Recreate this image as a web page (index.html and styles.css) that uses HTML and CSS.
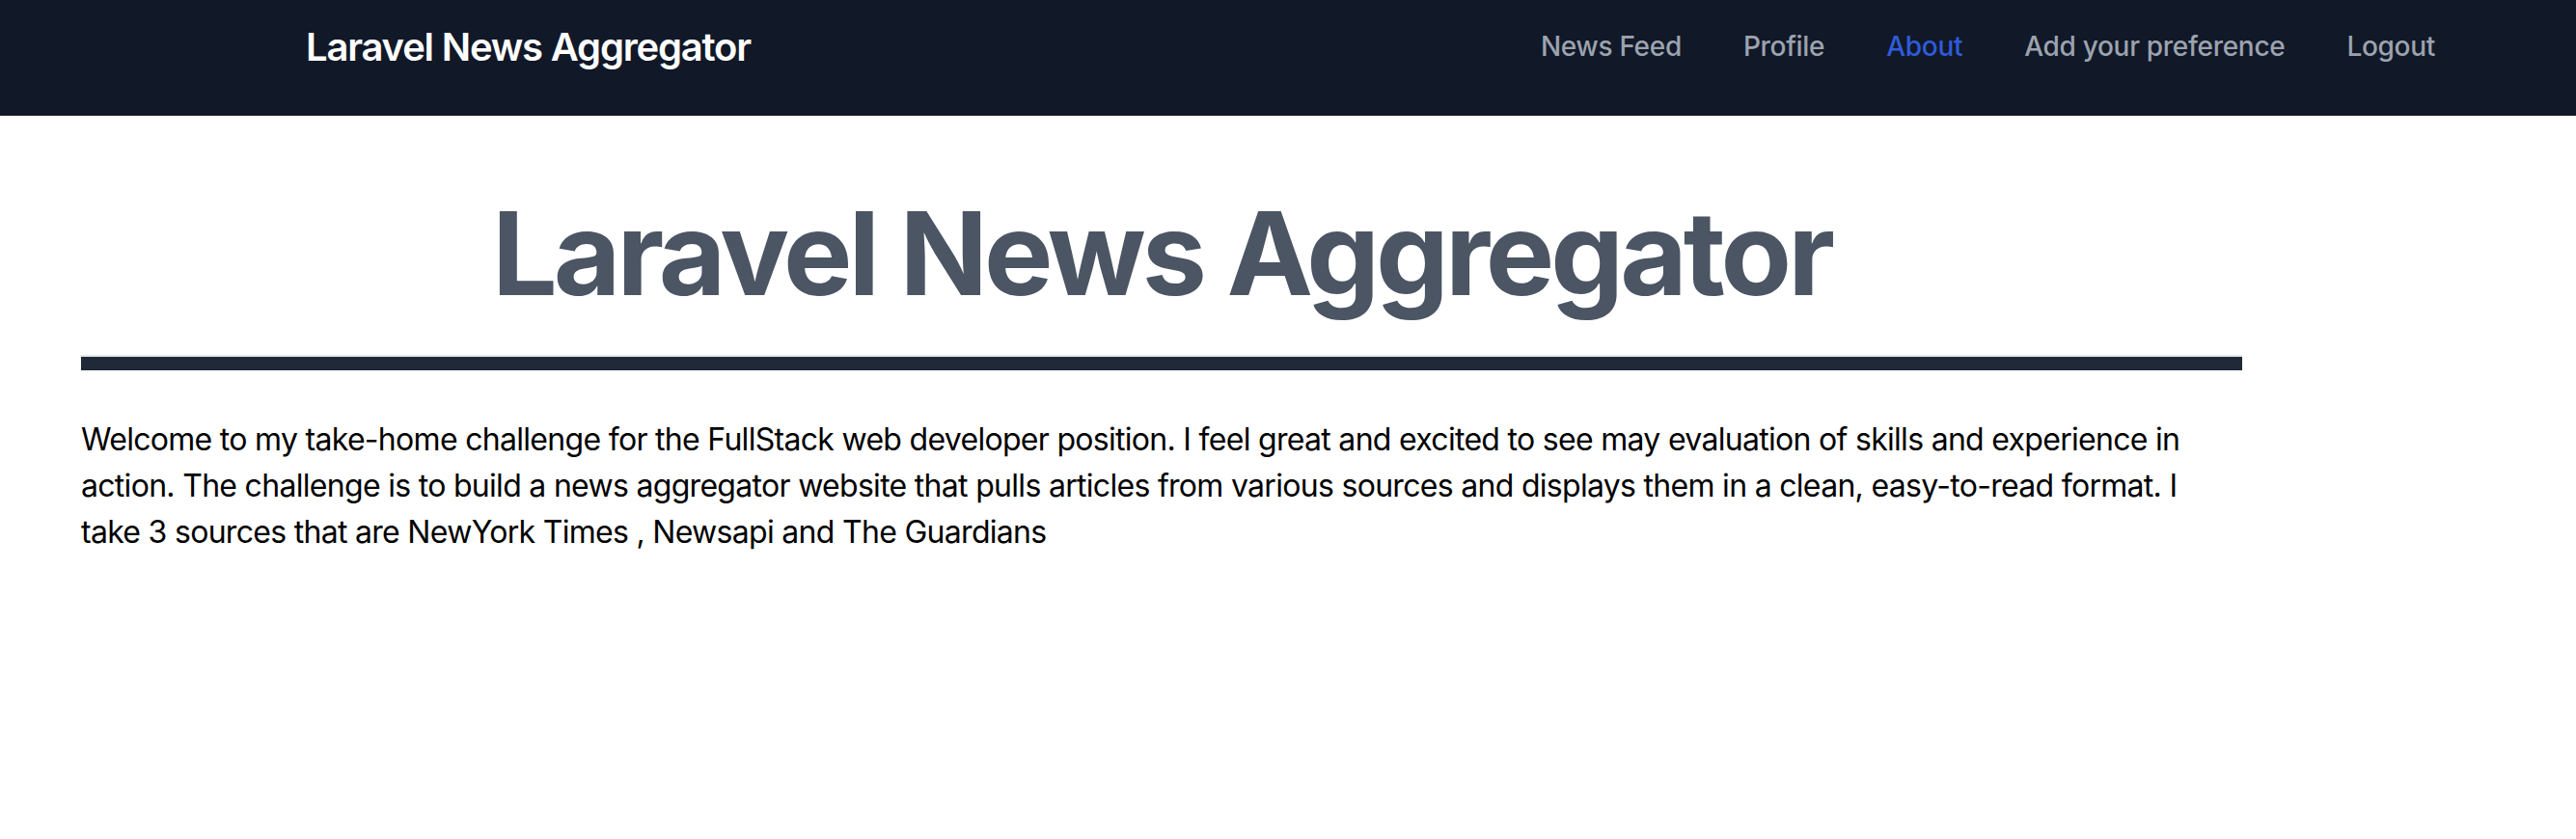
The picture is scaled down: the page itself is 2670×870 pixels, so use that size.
FILE: index.html
```html
<!DOCTYPE html>
<html lang="en">
<head>
<meta charset="utf-8">
<title>About - Laravel News Aggregator</title>
<link rel="stylesheet" href="styles.css">
</head>
<body>
<nav class="navbar">
  <div class="navbar-inner">
    <a class="brand" href="#">Laravel News Aggregator</a>
    <ul class="nav-links">
      <li><a class="nav-link" href="#">News Feed</a></li>
      <li><a class="nav-link" href="#">Profile</a></li>
      <li><a class="nav-link active" href="#">About</a></li>
      <li><a class="nav-link" href="#">Add your preference</a></li>
      <li><a class="nav-link" href="#">Logout</a></li>
    </ul>
  </div>
</nav>
<main class="content">
  <h1 class="title">Laravel News Aggregator</h1>
  <div class="divider"></div>
  <p class="intro">Welcome to my take-home challenge for the FullStack web developer position. I feel great and excited to see may evaluation of skills and experience in action. The challenge is to build a news aggregator website that pulls articles from various sources and displays them in a clean, easy-to-read format. I take 3 sources that are NewYork Times , Newsapi and The Guardians</p>
</main>
</body>
</html>
```

FILE: styles.css
```css
* {
  box-sizing: border-box;
}

html, body {
  margin: 0;
  padding: 0;
  background: #ffffff;
  font-family: Inter, "Noto Sans", "Liberation Sans", sans-serif;
}

.navbar {
  background: #111827;
  height: 120px;
}

.navbar-inner {
  height: 96px;
  display: flex;
  align-items: center;
  justify-content: space-between;
  padding: 0 146px 0 317px;
}

.brand {
  color: #ffffff;
  font-size: 40px;
  font-weight: 600;
  text-decoration: none;
  letter-spacing: -1.2px;
}

.nav-links {
  list-style: none;
  margin: 0;
  padding: 0;
  display: flex;
  gap: 64px;
}

.nav-link {
  color: #9ca3af;
  font-size: 28px;
  font-weight: 500;
  text-decoration: none;
  letter-spacing: -0.3px;
}

.nav-link.active {
  color: #2f5bd9;
}

.content {
  width: 2240px;
  margin-left: 84px;
  padding-top: 83px;
}

.title {
  margin: 0;
  text-align: center;
  font-size: 120px;
  line-height: 120px;
  font-weight: 700;
  color: #4b5563;
  letter-spacing: -4px;
}

.divider {
  margin-top: 45px;
  height: 16px;
  border-top: 2px solid #e5e7eb;
  background: #1f2937;
  background-clip: content-box;
}

.intro {
  margin: 48px 0 0;
  padding-right: 34px;
  font-size: 32px;
  line-height: 48px;
  color: #000000;
  letter-spacing: -0.7px;
}
```
